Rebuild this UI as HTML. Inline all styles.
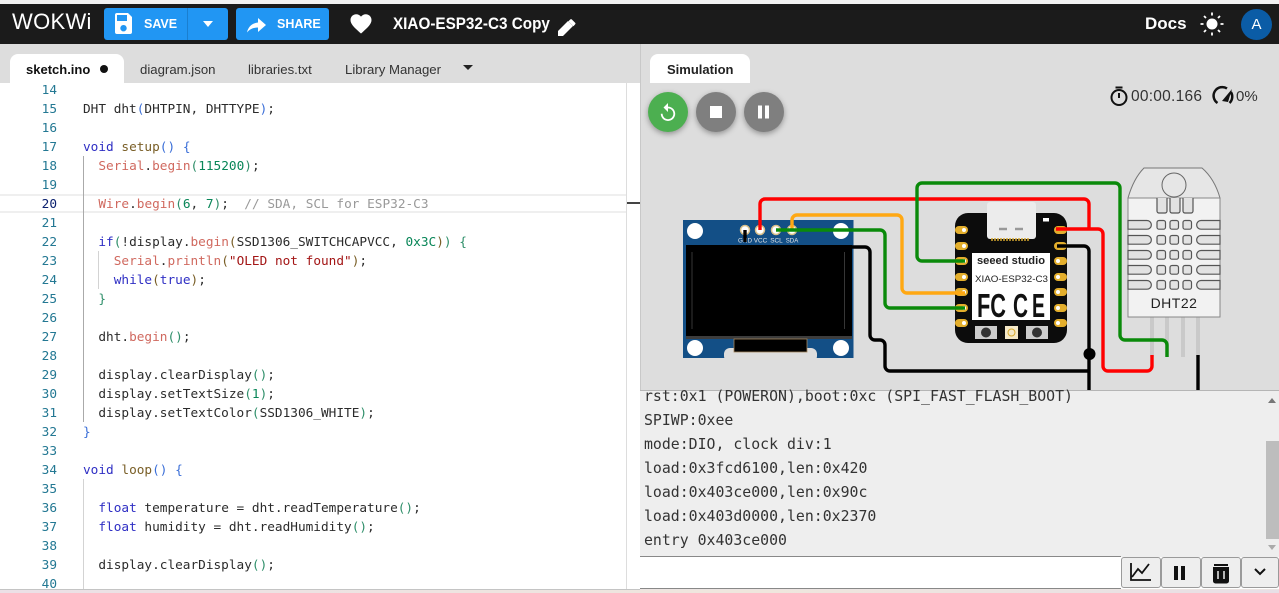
<!DOCTYPE html>
<html><head><meta charset="utf-8"><style>
html,body{margin:0;padding:0;width:1279px;height:593px;overflow:hidden;background:#fff}
body{position:relative;font-family:"Liberation Sans",sans-serif}
.a{position:absolute}
.c{position:absolute;left:83px;height:19px;margin-top:1px;font:12.75px/19px "DejaVu Sans Mono","Liberation Mono",monospace;color:#2b2b2b;white-space:pre;letter-spacing:0}
.n{position:absolute;left:20px;width:37px;margin-top:1px;text-align:right;font:12.75px/19px "DejaVu Sans Mono","Liberation Mono",monospace;color:#237893}
.r{color:#d0695f}.k{color:#2f2fc4}.g{color:#2f8f6a}.b{color:#3b6fd8}.y{color:#795e26}.m{color:#098658}.s{color:#a31515}.o{color:#999}
.tab{position:absolute;top:62px;font-size:13.2px;line-height:16px;color:#333}
.ser{position:absolute;left:644px;font:14.85px/24px "DejaVu Sans Mono","Liberation Mono",monospace;color:#333;white-space:pre}
.btn{position:absolute;top:557px;height:31px;width:39px;background:#eee;border:1px solid #9a9a9a;box-sizing:border-box;border-radius:3px}
</style></head><body>
<!-- top -->
<div class="a" style="left:0;top:0;width:1279px;height:4px;background:#f2f2f2"></div>
<div class="a" style="left:0;top:4px;width:1279px;height:40px;background:#1b1b1b"></div>
<div class="a" style="left:0;top:44px;width:1279px;height:39px;background:#ddd"></div>
<div class="a" style="left:12px;top:9px;color:#fff;font:22px/26px 'Liberation Sans',sans-serif;width:82px;letter-spacing:.3px">WOKWi</div>
<div class="a" style="left:104px;top:8px;width:124px;height:32px;background:#2196f3;border-radius:3px"></div>
<div class="a" style="left:187px;top:8px;width:1px;height:32px;background:#1a7fd0"></div>
<div class="a" style="left:144px;top:16px;color:#fff;font:bold 12.5px/16px 'Liberation Sans',sans-serif">SAVE</div>
<div class="a" style="left:236px;top:8px;width:93px;height:32px;background:#2196f3;border-radius:3px"></div>
<div class="a" style="left:277px;top:16px;color:#fff;font:bold 12.5px/16px 'Liberation Sans',sans-serif">SHARE</div>
<svg class="a" style="left:0;top:0" width="640" height="44" fill="#fff">
<path d="M117 14h11l4 4v15a2 2 0 0 1-2 2h-13a2 2 0 0 1-2-2V16a2 2 0 0 1 2-2zm0 2v6h10v-6zm6.500 10a3.200 3.200 0 1 0 .01 0z" fill-rule="evenodd" transform="translate(0,-1)"/>
<path d="M203 21h10l-5 6z"/>
<path d="M247 32.500c1-5.500 5-9.500 11-10V18l8 7-8 7v-4.500c-4 0-8 1.200-11 5z"/>
<path d="M361 33.500l-1.500-1.300C354 27.200 350.500 24 350.500 20c0-3.200 2.500-5.700 5.700-5.700 1.800 0 3.600.9 4.800 2.300 1.200-1.400 3-2.300 4.800-2.300 3.200 0 5.700 2.500 5.700 5.700 0 4-3.500 7.200-9 12.200z"/>
<path d="M558 31v5h5l10-10-5-5zM575 24.500a1.300 1.300 0 0 0 0-1.900l-3-3a1.300 1.300 0 0 0-1.900 0l-1.700 1.700 5 5z"/>
</svg>
<div class="a" style="left:393px;top:14px;color:#fff;font:bold 16.5px/20px 'Liberation Sans',sans-serif;white-space:nowrap;transform-origin:0 0;transform:scaleX(.925)">XIAO-ESP32-C3 Copy</div>
<div class="a" style="left:1145px;top:14px;color:#fff;font:bold 17px/20px 'Liberation Sans',sans-serif">Docs</div>
<svg class="a" style="left:1195px;top:7px" width="34" height="34" fill="#fff"><circle cx="17" cy="17" r="5.500"/><path d="M17 5.500v3M17 25.500v3M5.500 17h3M25.500 17h3M9 9l2 2M23 23l2 2M9 25l2-2M23 11l2-2" stroke="#fff" stroke-width="1.800"/></svg>
<div class="a" style="left:1241px;top:9px;width:31px;height:31px;border-radius:50%;background:#0b5ca6;color:#fff;font:15px/31px 'Liberation Sans',sans-serif;text-align:center">A</div>
<!-- tabs -->
<div class="a" style="left:10px;top:54px;width:114px;height:29px;background:#fff;border-radius:8px 8px 0 0"></div>
<div class="tab" style="left:26px;color:#111;font-weight:bold;font-size:13px">sketch.ino</div>
<div class="a" style="left:100px;top:65px;width:8px;height:8px;border-radius:50%;background:#111"></div>
<div class="tab" style="left:140px">diagram.json</div>
<div class="tab" style="left:248px">libraries.txt</div>
<div class="tab" style="left:345px">Library Manager</div>
<div class="a" style="left:463px;top:65px;border:5px solid transparent;border-top:5px solid #222;border-bottom:0"></div>
<!-- editor -->
<div class="a" style="left:0;top:194px;width:626px;height:15px;border-top:2px solid #efefef;border-bottom:2px solid #efefef"></div>
<div class="a" style="left:626px;top:83px;width:1px;height:507px;background:#ddd"></div>
<div class="a" style="left:627px;top:202px;width:13px;height:2px;background:#444"></div>
<div class="a" style="left:83px;top:156px;width:1px;height:266px;background:#aaa"></div>
<div class="a" style="left:83px;top:479px;width:1px;height:111px;background:#d3d3d3"></div>
<div class="a" style="left:98px;top:251px;width:1px;height:38px;background:#d3d3d3"></div>
<div class="n" style="top:80px">14</div>
<div class="n" style="top:99px">15</div><div class="c" style="top:99px">DHT dht<span class="b">(</span>DHTPIN, DHTTYPE<span class="b">)</span>;</div>
<div class="n" style="top:118px">16</div>
<div class="n" style="top:137px">17</div><div class="c" style="top:137px"><span class="k">void</span> <span class="y">setup</span><span class="b">() {</span></div>
<div class="n" style="top:156px">18</div><div class="c" style="top:156px">  <span class="r">Serial</span>.<span class="r">begin</span><span class="g">(</span><span class="m">115200</span><span class="g">)</span>;</div>
<div class="n" style="top:175px">19</div>
<div class="n" style="top:194px;color:#0b216f">20</div><div class="c" style="top:194px">  <span class="r">Wire</span>.<span class="r">begin</span><span class="g">(</span><span class="m">6</span>, <span class="m">7</span><span class="g">)</span>;  <span class="o">// SDA, SCL for ESP32-C3</span></div>
<div class="n" style="top:213px">21</div>
<div class="n" style="top:232px">22</div><div class="c" style="top:232px">  <span class="k">if</span><span class="g">(</span>!display.<span class="r">begin</span><span class="y">(</span>SSD1306_SWITCHCAPVCC, <span class="m">0x3C</span><span class="y">)</span><span class="g">)</span> <span class="g">{</span></div>
<div class="n" style="top:251px">23</div><div class="c" style="top:251px">    <span class="r">Serial</span>.<span class="r">println</span><span class="y">(</span><span class="s">"OLED not found"</span><span class="y">)</span>;</div>
<div class="n" style="top:270px">24</div><div class="c" style="top:270px">    <span class="k">while</span><span class="y">(</span><span class="k">true</span><span class="y">)</span>;</div>
<div class="n" style="top:289px">25</div><div class="c" style="top:289px">  <span class="g">}</span></div>
<div class="n" style="top:308px">26</div>
<div class="n" style="top:327px">27</div><div class="c" style="top:327px">  dht.<span class="r">begin</span><span class="g">()</span>;</div>
<div class="n" style="top:346px">28</div>
<div class="n" style="top:365px">29</div><div class="c" style="top:365px">  display.clearDisplay<span class="g">()</span>;</div>
<div class="n" style="top:384px">30</div><div class="c" style="top:384px">  display.setTextSize<span class="g">(</span><span class="m">1</span><span class="g">)</span>;</div>
<div class="n" style="top:403px">31</div><div class="c" style="top:403px">  display.setTextColor<span class="g">(</span>SSD1306_WHITE<span class="g">)</span>;</div>
<div class="n" style="top:422px">32</div><div class="c" style="top:422px"><span class="b">}</span></div>
<div class="n" style="top:441px">33</div>
<div class="n" style="top:460px">34</div><div class="c" style="top:460px"><span class="k">void</span> <span class="y">loop</span><span class="b">() {</span></div>
<div class="n" style="top:479px">35</div>
<div class="n" style="top:498px">36</div><div class="c" style="top:498px">  <span class="k">float</span> temperature = dht.readTemperature<span class="g">()</span>;</div>
<div class="n" style="top:517px">37</div><div class="c" style="top:517px">  <span class="k">float</span> humidity = dht.readHumidity<span class="g">()</span>;</div>
<div class="n" style="top:536px">38</div>
<div class="n" style="top:555px">39</div><div class="c" style="top:555px">  display.clearDisplay<span class="g">()</span>;</div>
<div class="n" style="top:574px">40</div>
<!-- simulation -->
<div class="a" style="left:640px;top:83px;width:639px;height:307px;background:#ddd"></div>
<div class="a" style="left:640px;top:44px;width:1px;height:546px;background:#c8c8c8"></div>
<div class="a" style="left:650px;top:54px;width:100px;height:29px;background:#fff;border-radius:8px 8px 0 0"></div>
<div class="tab" style="left:667px;font-weight:bold;color:#222;font-size:13px">Simulation</div>
<div class="a" style="left:648px;top:92px;width:40px;height:40px;border-radius:50%;background:#4caf50;box-shadow:0 2px 6px rgba(0,0,0,.35)"></div>
<div class="a" style="left:696px;top:92px;width:40px;height:40px;border-radius:50%;background:#7f7f7f;box-shadow:0 2px 6px rgba(0,0,0,.35)"></div>
<div class="a" style="left:744px;top:92px;width:40px;height:40px;border-radius:50%;background:#7f7f7f;box-shadow:0 2px 6px rgba(0,0,0,.35)"></div>
<svg class="a" style="left:640px;top:83px" width="160" height="60" fill="#fff">
<path transform="translate(17.200,19.100) scale(.9)" d="M12 5V1L7 6l5 5V7c3.310 0 6 2.690 6 6s-2.690 6-6 6-6-2.690-6-6H4c0 4.420 3.580 8 8 8s8-3.580 8-8-3.580-8-8-8z"/>
<rect x="70" y="23" width="12" height="12"/><rect x="118" y="22.500" width="4" height="13"/><rect x="125" y="22.500" width="4" height="13"/>
</svg>
<svg class="a" style="left:1105px;top:82px" width="140" height="30" fill="none" stroke="#111" stroke-width="2"><circle cx="14" cy="15.500" r="7.500"/><path d="M10.500 5.500h7M14 11v5"/><path d="M112.500 21a8.500 8.500 0 0 1 9.500-14.500M125.800 10a8.500 8.500 0 0 1-1.300 11" stroke-width="2.500"/><path d="M117 19l10-12-4 13z" fill="#111" stroke="none"/></svg>
<div class="a" style="left:1131px;top:88px;font:15.500px/18px 'Liberation Sans',sans-serif;color:#333;white-space:nowrap;letter-spacing:.25px">00:00.166</div>
<div class="a" style="left:1236px;top:88px;font:15px/18px 'Liberation Sans',sans-serif;color:#333">0%</div>
<svg class="a" style="left:0;top:0" width="1279" height="390" font-family="Liberation Sans, sans-serif">
<!-- OLED -->
<rect x="683" y="220" width="170.500" height="138" fill="#134f86"/>
<rect x="686" y="245" width="166" height="91" fill="#000"/>
<rect x="686" y="336" width="166" height="3" fill="#3d3d3d"/>
<path d="M692 252v77M844.500 252v77" stroke="#444" stroke-width=".8"/>
<rect x="724" y="348" width="93" height="14" rx="6" fill="#ddd"/>
<rect x="734" y="339" width="73" height="13" fill="#000" stroke="#a5875e" stroke-width=".8"/>
<circle cx="695" cy="231" r="8" fill="#fff"/><circle cx="841" cy="231" r="8" fill="#fff"/><circle cx="695" cy="348" r="8" fill="#fff"/><circle cx="841" cy="348" r="8" fill="#fff"/>
<g fill="#fff" stroke="#d9c08a" stroke-width="1.500"><circle cx="745" cy="230" r="4.500"/><circle cx="760" cy="230" r="4.500"/><circle cx="776" cy="230" r="4.500"/><circle cx="792" cy="230" r="4.500"/></g>
<g fill="#e4e4e4" font-size="6.500" text-anchor="middle"><text x="745" y="242.500" textLength="14" lengthAdjust="spacingAndGlyphs">GND</text><text x="760.500" y="242.500" textLength="13.500" lengthAdjust="spacingAndGlyphs">VCC</text><text x="776.500" y="242.500" textLength="12.500" lengthAdjust="spacingAndGlyphs">SCL</text><text x="792" y="242.500" textLength="12.500" lengthAdjust="spacingAndGlyphs">SDA</text></g>
<!-- XIAO -->
<rect x="955" y="213" width="112" height="130" rx="13" fill="#0c0c0c"/>
<g fill="#e3ae2c">
<rect x="955" y="226" width="13" height="8" rx="4"/><rect x="955" y="242" width="13" height="8" rx="4"/><rect x="955" y="257" width="13" height="8" rx="4"/><rect x="955" y="273" width="13" height="8" rx="4"/><rect x="955" y="288" width="13" height="8" rx="4"/><rect x="955" y="304" width="13" height="8" rx="4"/><rect x="955" y="319" width="13" height="8" rx="4"/>
<rect x="1054" y="226" width="13" height="8" rx="4"/><rect x="1054" y="242" width="13" height="8" rx="4"/><rect x="1054" y="257" width="13" height="8" rx="4"/><rect x="1054" y="273" width="13" height="8" rx="4"/><rect x="1054" y="288" width="13" height="8" rx="4"/><rect x="1054" y="304" width="13" height="8" rx="4"/><rect x="1054" y="319" width="13" height="8" rx="4"/>
</g>
<g fill="#fff"><circle cx="964" cy="230" r="2"/><circle cx="964" cy="246" r="2"/><circle cx="964" cy="261" r="2"/><circle cx="964" cy="277" r="2"/><circle cx="964" cy="292" r="2"/><circle cx="964" cy="308" r="2"/><circle cx="964" cy="323" r="2"/><circle cx="1058" cy="261" r="2"/><circle cx="1058" cy="277" r="2"/><circle cx="1058" cy="292" r="2"/><circle cx="1058" cy="308" r="2"/><circle cx="1058" cy="323" r="2"/></g>
<rect x="987" y="202" width="49" height="37" rx="3" fill="#ececec"/>
<path d="M999 229h8M1015 229h8" stroke="#999" stroke-width="2.500"/>
<path d="M992 238v3M995 238v3M998 238v3M1001 238v3M1004 238v3M1007 238v3M1010 238v3M1013 238v3M1016 238v3M1019 238v3M1022 238v3M1025 238v3M1028 238v3" stroke="#d4a62e" stroke-width="1.500"/>
<rect x="1043" y="218" width="6" height="3.500" fill="#fff"/>
<rect x="972" y="253" width="78" height="67" fill="#fff"/>
<text x="977" y="264" font-size="11" font-weight="bold" fill="#222" textLength="68" lengthAdjust="spacingAndGlyphs">seeed studio</text>
<text x="975" y="282" font-size="9" fill="#222" textLength="73" lengthAdjust="spacingAndGlyphs">XIAO-ESP32-C3</text>
<text x="977" y="317" font-size="33" font-weight="bold" fill="#111" textLength="29" lengthAdjust="spacingAndGlyphs">FC</text>
<text x="1013" y="317" font-size="33" font-weight="bold" fill="#111" textLength="15" lengthAdjust="spacingAndGlyphs">C</text>
<text x="1032" y="317" font-size="33" font-weight="bold" fill="#111" textLength="13" lengthAdjust="spacingAndGlyphs">E</text>
<rect x="975" y="326" width="22" height="13" fill="#ccc"/><circle cx="986" cy="332.500" r="5" fill="#333"/>
<rect x="1005" y="326" width="13" height="13" fill="#f5e9c8"/><circle cx="1011.500" cy="332.500" r="3.500" fill="none" stroke="#d8a92d"/>
<rect x="1026" y="326" width="22" height="13" fill="#ccc"/><circle cx="1037" cy="332.500" r="5" fill="#333"/>
<!-- DHT22 -->
<path d="M1152 317v40M1167 317v40M1183 317v40M1198 317v40" stroke="#c9c9c9" stroke-width="4"/>
<path d="M1128 198c4-14 10-24 16-30h58c7 6 14 16 18 30z" fill="#e6e6e6" stroke="#777"/>
<rect x="1128" y="198" width="92" height="119" fill="#f2f2f2" stroke="#888"/>
<circle cx="1174" cy="185" r="12" fill="#e6e6e6" stroke="#666"/>
<g fill="#e2e2e2" stroke="#555" stroke-width="1.200">
<path d="M1157 198v13a2 2 0 0 0 2 2h6a2 2 0 0 0 2-2v-13M1170 198v13a2 2 0 0 0 2 2h6a2 2 0 0 0 2-2v-13M1183 198v13a2 2 0 0 0 2 2h6a2 2 0 0 0 2-2v-13"/>
<path d="M1128 220.500h19a4.300 4.300 0 0 1 0 8.700h-19zM1128 235.500h19a4.300 4.300 0 0 1 0 8.700h-19zM1128 250.500h19a4.300 4.300 0 0 1 0 8.700h-19zM1128 265.500h19a4.300 4.300 0 0 1 0 8.700h-19zM1128 280.500h19a4.300 4.300 0 0 1 0 8.700h-19z"/>
<path d="M1220 220.500h-19a4.300 4.300 0 0 0 0 8.700h19zM1220 235.500h-19a4.300 4.300 0 0 0 0 8.700h19zM1220 250.500h-19a4.300 4.300 0 0 0 0 8.700h19zM1220 265.500h-19a4.300 4.300 0 0 0 0 8.700h19zM1220 280.500h-19a4.300 4.300 0 0 0 0 8.700h19z"/>
<rect x="1157" y="220.500" width="8.500" height="8.700" rx="2"/><rect x="1170" y="220.500" width="8.500" height="8.700" rx="2"/><rect x="1183" y="220.500" width="8.500" height="8.700" rx="2"/>
<rect x="1157" y="235.500" width="8.500" height="8.700" rx="2"/><rect x="1170" y="235.500" width="8.500" height="8.700" rx="2"/><rect x="1183" y="235.500" width="8.500" height="8.700" rx="2"/>
<rect x="1157" y="250.500" width="8.500" height="8.700" rx="2"/><rect x="1170" y="250.500" width="8.500" height="8.700" rx="2"/><rect x="1183" y="250.500" width="8.500" height="8.700" rx="2"/>
<rect x="1157" y="265.500" width="8.500" height="8.700" rx="2"/><rect x="1170" y="265.500" width="8.500" height="8.700" rx="2"/><rect x="1183" y="265.500" width="8.500" height="8.700" rx="2"/>
<rect x="1157" y="280.500" width="8.500" height="8.700" rx="2"/><rect x="1170" y="280.500" width="8.500" height="8.700" rx="2"/><rect x="1183" y="280.500" width="8.500" height="8.700" rx="2"/>
</g>
<text x="1174" y="308" font-size="14" text-anchor="middle" fill="#222" letter-spacing=".5">DHT22</text>
<!-- wires -->
<g fill="none" stroke-width="3.400" stroke-linejoin="round">
<path d="M745 230v12" stroke="#000"/>
<path d="M852 247h13a5 5 0 0 1 5 5v83a5 5 0 0 0 5 5h5a5 5 0 0 1 5 5v21a5 5 0 0 0 5 5h199" stroke="#000"/>
<path d="M1057 246h27a5 5 0 0 1 5 5v139" stroke="#000"/>
<path d="M1198 355v35" stroke="#000"/>
<path d="M760 230v-26a5 5 0 0 1 5-5h319a5 5 0 0 1 5 5v25" stroke="#f00"/>
<path d="M1056 229h42a5 5 0 0 1 5 5v132a5 5 0 0 0 5 5h39a5 5 0 0 0 5-5v-11" stroke="#f00"/>
<path d="M792 230v-10a5 5 0 0 1 5-5h100a5 5 0 0 1 5 5v68a5 5 0 0 0 5 5h58" stroke="#ffa813"/>
<path d="M776 230h104a5 5 0 0 1 5 5v68a5 5 0 0 0 5 5h75" stroke="#0a8a0a"/>
<path d="M965 261h-43a5 5 0 0 1-5-5v-68a5 5 0 0 1 5-5h193a5 5 0 0 1 5 5v147a5 5 0 0 0 5 5h37a5 5 0 0 1 5 5v12" stroke="#0a8a0a"/>
</g>
<circle cx="1089.500" cy="354" r="6" fill="#000"/>
</svg>
<!-- serial -->
<div class="a" style="left:640px;top:390px;width:639px;height:167px;background:#eee;border-top:1px solid #b5b5b5;box-sizing:border-box;overflow:hidden"></div>
<div class="ser" style="top:384px">rst:0x1 (POWERON),boot:0xc (SPI_FAST_FLASH_BOOT)</div>
<div class="ser" style="top:408px">SPIWP:0xee</div>
<div class="ser" style="top:432px">mode:DIO, clock div:1</div>
<div class="ser" style="top:456px">load:0x3fcd6100,len:0x420</div>
<div class="ser" style="top:480px">load:0x403ce000,len:0x90c</div>
<div class="ser" style="top:504px">load:0x403d0000,len:0x2370</div>
<div class="ser" style="top:528px">entry 0x403ce000</div>
<div class="a" style="left:1266px;top:441px;width:13px;height:98px;background:#bdbdbd"></div>
<div class="a" style="left:1268px;top:398px;border:4px solid transparent;border-bottom:5px solid #777;border-top:0"></div>
<div class="a" style="left:1268px;top:545px;border:4px solid transparent;border-top:5px solid #aaa;border-bottom:0"></div>
<div class="a" style="left:640px;top:556px;width:481px;height:33px;background:#fff;border-top:1px solid #888;border-bottom:1px solid #888;box-sizing:border-box"></div>
<div class="btn" style="left:1121px;width:40px"></div><div class="btn" style="left:1161px;width:40px"></div><div class="btn" style="left:1201px;width:40px"></div><div class="btn" style="left:1241px;width:38px"></div>
<svg class="a" style="left:1121px;top:557px" width="158" height="32" fill="none" stroke="#111" stroke-width="2">
<path d="M10 6v17h20" stroke-width="1.800"/><path d="M11 20l6-8 4 4 7-9" stroke-width="1.800"/>
<path d="M55 9v14M62 9v14" stroke-width="4"/>
<path d="M93 11h14v13a1.500 1.500 0 0 1-1.500 1.500h-11a1.500 1.500 0 0 1-1.500-1.500zM93 8h14" fill="#111" stroke-width="2"/><path d="M97 14v8M103 14v8" stroke="#eee" stroke-width="1.500"/>
<path d="M134 12l5 5 5-5" stroke-width="2"/>
</svg>
<div class="a" style="left:0;top:589px;width:640px;height:1px;background:#c4c4c4"></div>
<div class="a" style="left:0;top:590px;width:1279px;height:3px;background:linear-gradient(90deg,#ece0e6,#efe6dd 60%,#e8dfe6)"></div>
<div class="a" style="left:640px;top:589px;width:639px;height:1px;background:#ece4e2"></div>
</body></html>
